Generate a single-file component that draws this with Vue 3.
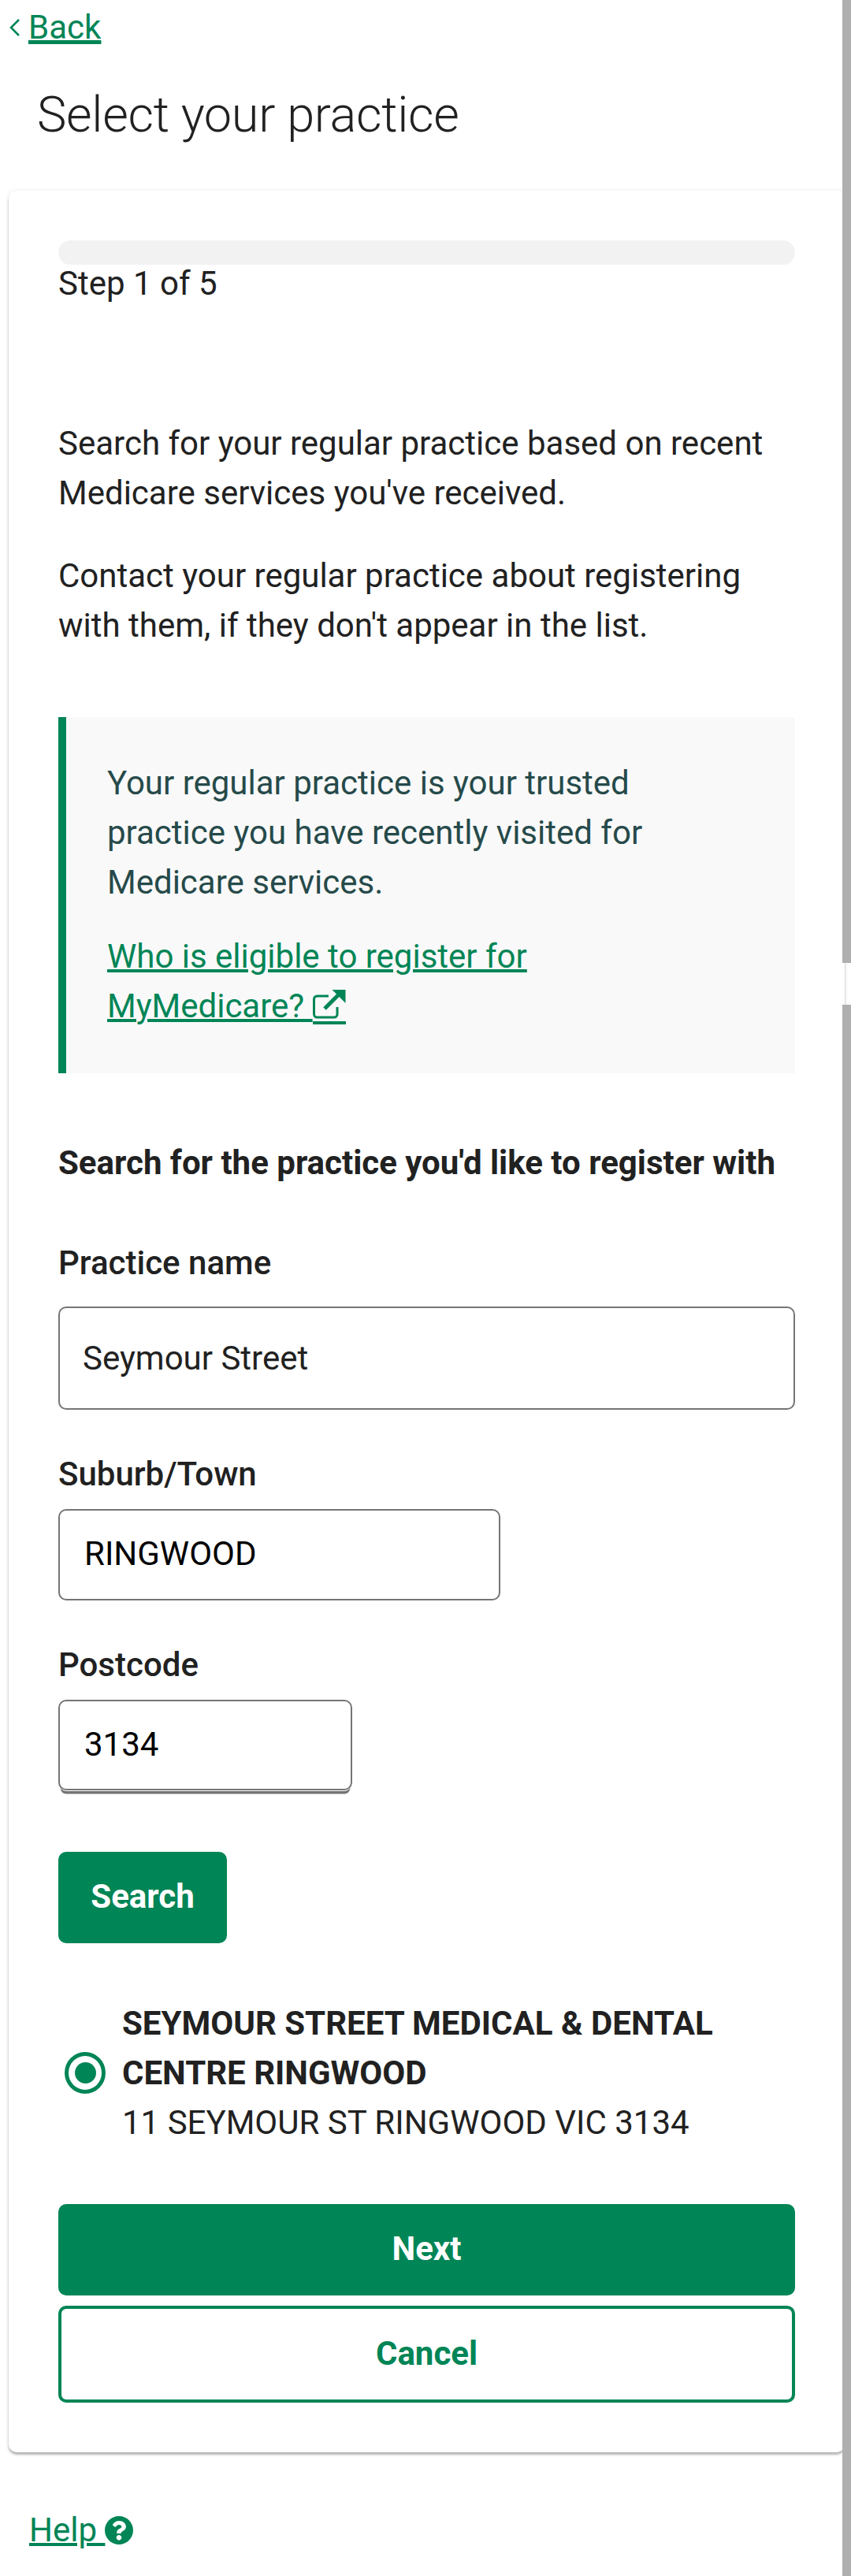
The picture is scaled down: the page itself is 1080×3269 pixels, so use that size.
<script setup>
const fields = [
  { label: 'Suburb/Town', value: 'RINGWOOD', cls: 'suburb' },
  { label: 'Postcode', value: '3134', cls: 'postcode' },
];
</script>

<template>
  <div class="page">
    <a class="back" href="#">
      <svg class="chevron" width="13" height="22" viewBox="0 0 13 22"><path d="M12 1 2 11l10 10" fill="none" stroke="#008556" stroke-width="2.6" /></svg>
      <span>Back</span>
    </a>
    <h1 class="title">Select your practice</h1>

    <div class="card">
      <div class="progress"></div>
      <div class="step">Step 1 of 5</div>

      <p class="intro first">Search for your regular practice based on recent Medicare services you've received.</p>
      <p class="intro">Contact your regular practice about registering with them, if they don't appear in the list.</p>

      <div class="callout">
        <p>Your regular practice is your trusted practice you have recently visited for Medicare services.</p>
        <a href="#">Who is eligible to register for MyMedicare?
          <!-- the underline runs on under the icon in the original, so it is part of the svg -->
          <svg class="ext" width="42" height="44" viewBox="0 0 42 44">
            <path d="M31 22v9a4 4 0 0 1-4 4H5.500a4 4 0 0 1-4-4V12a4 4 0 0 1 4-4H20" fill="none" stroke="#008556" stroke-width="3" />
            <path d="M15 24 33 6" fill="none" stroke="#008556" stroke-width="5" />
            <path d="M41.500 0v17L24.500 0z" fill="#008556" />
            <rect x="-12" y="40" width="54" height="4" fill="#008556" />
          </svg>
        </a>
      </div>

      <h2 class="heading">Search for the practice you'd like to register with</h2>

      <label class="label first-label">Practice name</label>
      <input class="input name" type="text" value="Seymour Street" />

      <div v-for="f in fields" :key="f.cls" class="field">
        <label class="label">{{ f.label }}</label>
        <input class="input" :class="f.cls" type="text" :value="f.value" />
      </div>

      <button class="btn search">Search</button>

      <div class="result">
        <span class="radio"><span class="dot"></span></span>
        <div class="result-text">
          <strong>SEYMOUR STREET MEDICAL &amp; DENTAL CENTRE RINGWOOD</strong>
          <span>11 SEYMOUR ST RINGWOOD VIC 3134</span>
        </div>
      </div>

      <button class="btn next">Next</button>
      <button class="btn cancel">Cancel</button>
    </div>

    <a class="help" href="#">Help&nbsp;<svg class="help-icon" width="36" height="36" viewBox="8 8 496 496"><path fill="#008556" d="M504 256c0 136.997-111.043 248-248 248S8 392.997 8 256C8 119.083 119.043 8 256 8s248 111.083 248 248zM262.655 90c-54.497 0-89.255 22.957-116.549 63.758-3.536 5.286-2.353 12.415 2.715 16.258l34.699 26.31c5.205 3.947 12.621 3.008 16.665-2.122 17.864-22.658 30.113-35.797 57.303-35.797 20.429 0 45.698 13.148 45.698 32.958 0 14.976-12.363 22.667-32.534 33.976C247.128 238.528 216 254.941 216 296v4c0 6.627 5.373 12 12 12h56c6.627 0 12-5.373 12-12v-1.333c0-28.462 83.186-29.647 83.186-106.667 0-58.002-60.165-102-116.531-102zM256 338c-25.365 0-46 20.635-46 46 0 25.364 20.635 46 46 46s46-20.636 46-46c0-25.365-20.635-46-46-46z" /></svg></a>

    <!-- scrollbar from the original capture, it lies over the page -->
    <div class="scroll upper"></div>
    <div class="scroll lower"></div>
  </div>
</template>

<style scoped>
.page {
  position: relative;
  width: 1080px;
  height: 3269px;
  overflow: hidden;
  background: #fff;
  font-family: Roboto, "Liberation Sans", sans-serif;
  font-size: 42px;
  line-height: 63px;
  color: #212121;
}

.back {
  display: flex;
  align-items: center;
  gap: 11px;
  padding: 3px 0 0 12px;
  height: 63px;
  box-sizing: content-box;
  width: fit-content;
  color: #008556;
}
.back span {
  text-decoration: underline;
  text-decoration-thickness: 4px;
}
.chevron {
  flex: none;
}

.title {
  margin: 42px 0 0 47px;
  font-size: 63px;
  line-height: 76px;
  font-weight: 300;
  letter-spacing: -0.3px;
  color: #212121;
}

.card {
  width: 1061px;
  box-sizing: border-box;
  margin: 58px 0 0 11px;
  padding: 63px;
  background: #fff;
  border-radius: 10px;
  box-shadow: 0 3px 3px rgba(0, 0, 0, 0.28), 0 0 6px rgba(0, 0, 0, 0.08);
}

.progress {
  height: 31px;
  border-radius: 16px;
  background: #f2f2f2;
}
.step {
  margin-top: -1px;
  line-height: 49px;
}

.intro {
  margin: 42px 0 0;
}
.intro.first {
  margin-top: 147px;
}

.callout {
  margin-top: 85px;
  padding: 52px 168px 54px 52px;
  border-left: 10px solid #008556;
  background: #f9f9f9;
  color: #264a4a;
}
.callout p {
  margin: 0 0 31px;
}
.callout a {
  color: #008556;
  text-decoration: underline;
  text-decoration-thickness: 4px;
}
.ext {
  vertical-align: -9px;
}

.heading {
  margin: 82px 0 0;
  font-size: 42px;
  line-height: 63px;
  font-weight: 700;
}

.label {
  display: block;
  font-weight: 500;
  line-height: 49px;
}
.first-label {
  margin-top: 71px;
}

.input {
  display: block;
  box-sizing: border-box;
  border: 2.6px solid #757575;
  border-radius: 10px;
  background: #fff;
  font: inherit;
  color: #000;
  outline: none;
}
.input.name {
  width: 935px;
  height: 131px;
  margin-top: 31px;
  padding: 0 29px;
  color: #212121;
}
.input.suburb {
  width: 561px;
  height: 116px;
  margin-top: 20px;
  padding: 0 31px 3px;
}
.input.postcode {
  width: 373px;
  height: 115px;
  margin-top: 20px;
  padding: 0 31px 3px;
  box-shadow: 0 2px 0 -1px #fff, 0 7px 0 -2.600px #757575;
}
.field {
  margin-top: 57px;
}

.btn {
  display: block;
  box-sizing: border-box;
  border: 0;
  border-radius: 10px;
  padding: 0 0 3px;
  background: #008556;
  color: #fff;
  font: inherit;
  font-weight: 700;
}
.search {
  width: 214px;
  height: 116px;
  margin-top: 78px;
}

.result {
  display: flex;
  align-items: center;
  margin-top: 70px;
  padding-left: 8px;
}
.radio {
  flex: none;
  display: flex;
  align-items: center;
  justify-content: center;
  width: 52px;
  height: 53px;
  box-sizing: border-box;
  margin-right: 21px;
  border: 5px solid #008556;
  border-radius: 50%;
}
.dot {
  width: 27px;
  height: 27px;
  border-radius: 50%;
  background: #008556;
}
.result-text strong {
  display: block;
  font-weight: 700;
}
.result-text span {
  display: block;
}

.next {
  width: 100%;
  height: 116px;
  margin-top: 72px;
}
.cancel {
  width: 100%;
  height: 123px;
  margin-top: 13px;
  border: 4px solid #008556;
  background: #fff;
  color: #008556;
}

.help {
  display: inline-flex;
  align-items: center;
  margin: 67px 0 0 37px;
  color: #008556;
  text-decoration: underline;
  text-decoration-thickness: 4px;
}
.help-icon {
  flex: none;
}

.scroll {
  position: absolute;
  right: 0;
  width: 11px;
  background: #afafaf;
}
.scroll.upper {
  top: 0;
  height: 1222px;
}
.scroll.lower {
  top: 1275px;
  bottom: 0;
}
</style>
